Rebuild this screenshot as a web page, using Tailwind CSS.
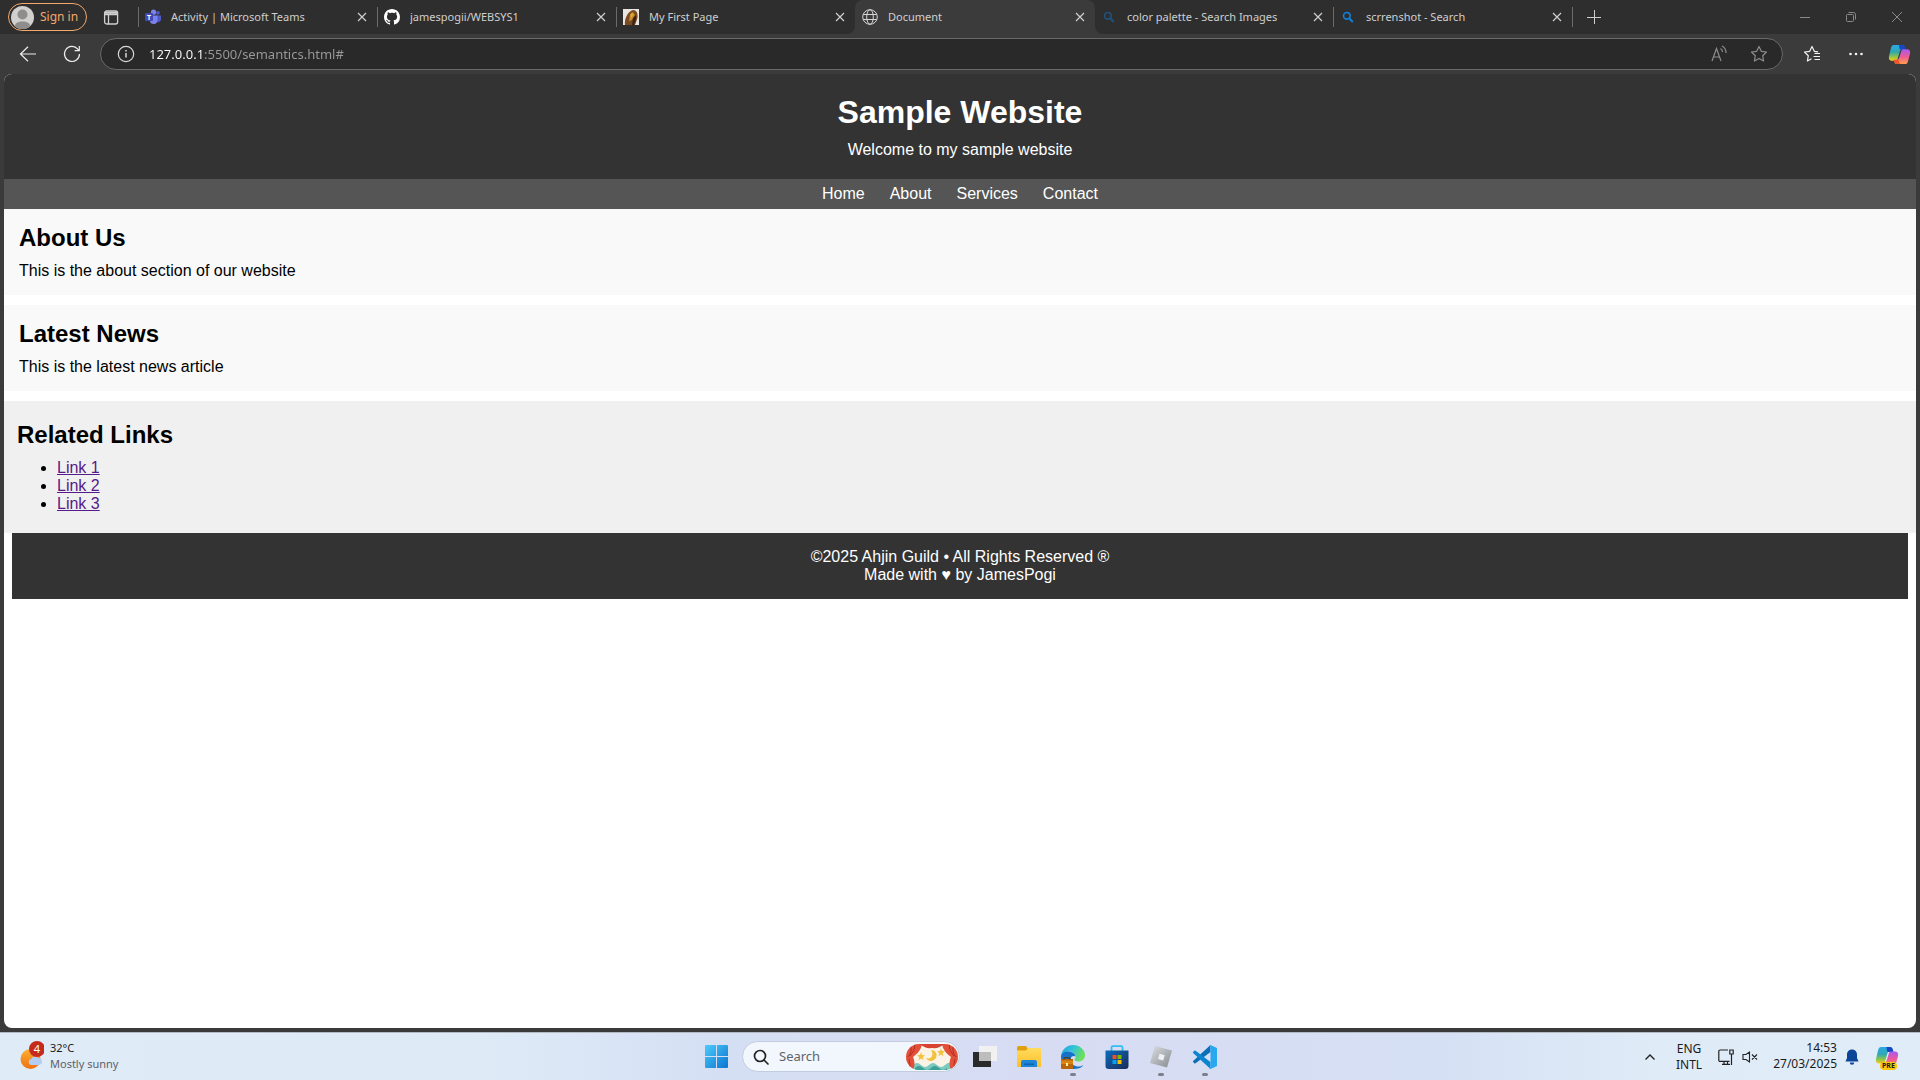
<!DOCTYPE html>
<html lang="en">
<head>
<meta charset="utf-8">
<title>Document</title>
<script src="https://cdn.jsdelivr.net/npm/@tailwindcss/browser@4"></script>
</head>
<body class="flex h-screen flex-col overflow-hidden bg-[#3b3b3b] font-['Noto_Sans',sans-serif]">

<svg class="absolute size-0" aria-hidden="true">
  <defs>
    <linearGradient id="cpA" x1="0" y1="0" x2="0" y2="1"><stop offset="0" stop-color="#2ba8e8"/><stop offset=".45" stop-color="#2fa9b0"/><stop offset=".75" stop-color="#8fc44a"/><stop offset="1" stop-color="#f5d414"/></linearGradient>
    <linearGradient id="cpB" x1="0" y1="0" x2="0" y2="1"><stop offset="0" stop-color="#a758f0"/><stop offset=".5" stop-color="#ee5a96"/><stop offset="1" stop-color="#ffa04a"/></linearGradient>
    <linearGradient id="win" x1="0" y1="0" x2="1" y2="1"><stop offset="0" stop-color="#4ccbfb"/><stop offset="1" stop-color="#0a74d0"/></linearGradient>
    <linearGradient id="fold" x1="0" y1="0" x2="0" y2="1"><stop offset="0" stop-color="#ffdc5c"/><stop offset="1" stop-color="#fcbf2e"/></linearGradient>
    <linearGradient id="edgeTop" x1="0" y1="0" x2="1" y2=".4"><stop offset="0" stop-color="#1b9de2"/><stop offset=".5" stop-color="#33c3d8"/><stop offset="1" stop-color="#6be05a"/></linearGradient>
    <linearGradient id="store" x1="0" y1="0" x2="1" y2="1"><stop offset="0" stop-color="#0a6cbf"/><stop offset="1" stop-color="#1b2b56"/></linearGradient>
    <linearGradient id="rbx" x1="0" y1="0" x2="1" y2="1"><stop offset="0" stop-color="#dcdfe2"/><stop offset="1" stop-color="#858b90"/></linearGradient>
    <linearGradient id="sun" x1="0" y1="0" x2="0" y2="1"><stop offset="0" stop-color="#fbb034"/><stop offset="1" stop-color="#f0700f"/></linearGradient>
    <symbol id="x" viewBox="0 0 16 16"><path d="M4 4l8 8M12 4l-8 8" fill="none" stroke="currentColor" stroke-width="1.2"/></symbol>
    <symbol id="mag" viewBox="0 0 16 16"><circle cx="6.8" cy="6.8" r="3.3" fill="none" stroke="currentColor" stroke-width="1.6"/><path d="M9.2 9.2l3.6 3.8" stroke="currentColor" stroke-width="2"/></symbol>
    <symbol id="copilot" viewBox="0 0 24 24">
      <path d="M6 2h8.500c1.500 0 2.300.8 2.700 2l.8 2.500h-3c-1.500 0-2.200.8-2.600 2l-2.200 7.500c-.5 1.500-1.200 2.500-2.800 2.500H4c-2.500 0-3.500-2-3-4.500L3 5.500C3.500 3.300 4.300 2 6 2z" fill="url(#cpA)"/>
      <path d="M11.500 2H15c1.500 0 2.300.8 2.700 2l.8 3h-4.700c-1 0-1.500-.5-1.900-1.500z" fill="#1747c4"/>
      <path d="M18 22H9.500c-1.500 0-2.300-.8-2.700-2L6 17.500h3c1.500 0 2.200-.8 2.600-2l2.200-7c.5-1.500 1.200-2 2.800-2H20c2.500 0 3.500 2 3 4.500l-2 7.500c-.5 2.200-1.300 3.500-3 3.500z" fill="url(#cpB)"/>
      <path d="M12.500 22h-3c-1.500 0-2.300-.8-2.700-2L6 17.500h3c1.500 0 2.200 0 2.500 1.500z" fill="#f0562c"/>
    </symbol>
  </defs>
</svg>

<!-- Tab strip -->
<div class="flex h-[34px] shrink-0 text-[11px] text-[#cfcfcf]">
  <div class="flex items-center rounded-br-lg bg-[#2e2e2e]">
    <button class="ml-2 flex h-7 w-[79px] items-center gap-[6px] rounded-full border border-[#f3a86c] pl-[2px] text-xs text-[#f3a86c]">
      <svg class="size-[23px]" viewBox="0 0 23 23"><clipPath id="av"><circle cx="11.500" cy="11.500" r="11.500"/></clipPath><g clip-path="url(#av)"><path d="M0 0h23v23H0z" fill="#d2d0ce"/><circle cx="11.500" cy="8.500" r="5" fill="#8f8d8b"/><path d="M4 23v-3c0-3 3-4.500 7.500-4.500S19 17 19 20v3z" fill="#8f8d8b"/></g></svg>
      <span>Sign in</span>
    </button>
    <button class="ml-4 mr-[19px]" aria-label="Tab actions"><svg class="size-4" viewBox="0 0 16 16" fill="none" stroke="#d0d0d0" stroke-width="1.300"><rect x="1.600" y="2" width="13" height="13" rx="2"/><path d="M1.600 5.500h13M5.500 5.500V15"/><path d="M2 3.800h12" stroke-width="2"/></svg></button>
    <div class="flex h-5 w-[239px] items-center gap-[10px] border-l border-[#6b6b6b] pl-[6px] pr-[7px]">
      <svg class="size-4" viewBox="0 0 16 16"><circle cx="8.500" cy="3.200" r="2.600" fill="#7b83eb"/><circle cx="13" cy="3.900" r="1.800" fill="#5059c9"/><path d="M11 6.500h5v4a3 3 0 0 1-5 2z" fill="#5059c9"/><path d="M5 6.500h7.500V11a4 4 0 0 1-7.500 2z" fill="#7b83eb"/><rect y="4" width="8" height="8" rx="1" fill="#4149b5"/><text x="4" y="10.500" font-size="7" font-weight="700" text-anchor="middle" fill="#fff">T</text></svg>
      <span class="flex-1 truncate">Activity | Microsoft Teams</span>
      <button aria-label="Close tab"><svg class="size-4"><use href="#x"/></svg></button>
    </div>
    <div class="flex h-5 w-[239px] items-center gap-[10px] border-l border-[#6b6b6b] pl-[6px] pr-[7px]">
      <svg class="size-4" viewBox="0 0 16 16"><path fill="#fff" d="M8 0C3.580 0 0 3.580 0 8c0 3.540 2.290 6.530 5.470 7.590.4.070.55-.17.55-.38 0-.19-.01-.82-.01-1.490-2.010.37-2.530-.49-2.690-.94-.09-.23-.48-.94-.82-1.130-.28-.15-.68-.52-.01-.53.630-.01 1.080.58 1.230.82.720 1.210 1.870.87 2.330.66.070-.52.280-.87.510-1.070-1.780-.2-3.640-.89-3.640-3.950 0-.87.310-1.590.820-2.150-.08-.2-.36-1.020.08-2.120 0 0 .67-.21 2.200.82.640-.18 1.320-.27 2-.27s1.360.09 2 .27c1.530-1.040 2.200-.82 2.200-.82.440 1.100.160 1.920.08 2.120.510.56.820 1.270.820 2.150 0 3.070-1.870 3.750-3.650 3.950.290.25.540.73.540 1.480 0 1.070-.01 1.930-.01 2.200 0 .21.150.46.550.38A8.010 8.010 0 0 0 16 8c0-4.420-3.580-8-8-8z"/></svg>
      <span class="flex-1 truncate">jamespogii/WEBSYS1</span>
      <button aria-label="Close tab"><svg class="size-4"><use href="#x"/></svg></button>
    </div>
    <div class="flex h-5 w-[239px] items-center gap-[10px] border-l border-[#6b6b6b] pl-[6px] pr-[7px]">
      <svg class="size-4" viewBox="0 0 16 16"><path d="M0 0h16v16H0z" fill="#e9e6e4"/><path d="M2 16C1 10 5 2 10 1c4 0 5 4 4.500 8L12 16z" fill="#7a4a20"/><path d="M7 5l3-2 2 3-3 5-3 1z" fill="#c98a2b"/><path d="M10 9l3-3v5l-2 5H9z" fill="#3d2416"/><path d="M8 6l1-2 1 2-2 3z" fill="#d4c32e"/></svg>
      <span class="flex-1 truncate">My First Page</span>
      <button aria-label="Close tab"><svg class="size-4"><use href="#x"/></svg></button>
    </div>
  </div>
  <div class="w-[240px] bg-[#2e2e2e]">
    <div class="flex h-full items-center gap-[10px] rounded-t-lg bg-[#3b3b3b] px-[7px]">
      <svg class="size-4" viewBox="0 0 16 16" fill="none" stroke="#d6d6d6"><circle cx="8" cy="8" r="7.300"/><ellipse cx="8" cy="8" rx="3.300" ry="7.300"/><path d="M1.300 5.500h13.400M1.300 10.500h13.400"/></svg>
      <span class="flex-1 truncate">Document</span>
      <button aria-label="Close tab"><svg class="size-4"><use href="#x"/></svg></button>
    </div>
  </div>
  <div class="flex flex-1 items-center rounded-bl-lg bg-[#2e2e2e]">
    <div class="flex h-5 w-[238px] items-center gap-[10px] pl-[6px] pr-[7px]">
      <svg class="size-4 text-[#20527c]"><use href="#mag"/></svg>
      <span class="flex-1 truncate">color palette - Search Images</span>
      <button aria-label="Close tab"><svg class="size-4"><use href="#x"/></svg></button>
    </div>
    <div class="flex h-5 w-[239px] items-center gap-[10px] border-l border-[#6b6b6b] pl-[6px] pr-[7px]">
      <svg class="size-4 text-[#1180dc]"><use href="#mag"/></svg>
      <span class="flex-1 truncate">scrrenshot - Search</span>
      <button aria-label="Close tab"><svg class="size-4"><use href="#x"/></svg></button>
    </div>
    <div class="flex h-5 flex-1 items-center border-l border-[#6b6b6b] pl-[13px]">
      <button aria-label="New tab"><svg class="size-4" viewBox="0 0 16 16"><path d="M8.500 1v14M1 8.500h14" stroke="#cfcfcf"/></svg></button>
    </div>
    <div class="flex text-[#8a8a8a]">
      <button class="flex w-[46px] justify-center" aria-label="Minimize"><svg class="size-3" viewBox="0 0 12 12"><path d="M1 6.500h10" stroke="currentColor"/></svg></button>
      <button class="flex w-[46px] justify-center" aria-label="Restore"><svg class="size-3" viewBox="0 0 12 12" fill="none" stroke="currentColor"><rect x="1.500" y="3.500" width="7" height="7" rx="1"/><path d="M3.500 1.500h5a2 2 0 0 1 2 2v5"/></svg></button>
      <button class="flex w-[46px] justify-center" aria-label="Close"><svg class="size-3" viewBox="0 0 12 12"><path d="M1 1l10 10M11 1L1 11" stroke="currentColor"/></svg></button>
    </div>
  </div>
</div>

<!-- Address row -->
<div class="flex h-10 shrink-0 items-center pl-[6px]">
  <button class="flex w-11 justify-center" aria-label="Back"><svg class="size-5" viewBox="0 0 20 20" fill="none" stroke="#ececec" stroke-width="1.200"><path d="M18 10H2.500M10 2.800L2.500 10l7.500 7.200"/></svg></button>
  <button class="flex w-11 justify-center" aria-label="Refresh"><svg class="size-5" viewBox="0 0 20 20" fill="none" stroke="#ececec" stroke-width="1.200"><path d="M17.500 10A7.500 7.500 0 1 1 15.800 5.200L17 6.500M17.300 2v4.700h-4.700"/></svg></button>
  <div class="ml-[6px] mr-[7px] flex h-8 flex-1 items-center rounded-full border border-[#696969] bg-[#292929] pl-4">
    <svg class="size-[18px]" viewBox="0 0 18 18" fill="none" stroke="#d8d8d8" stroke-width="1.200"><circle cx="9" cy="9" r="7.700"/><path d="M9 8v4.500M9 5v1.600" stroke-width="1.500"/></svg>
    <input class="ml-[14px] flex-1 bg-[linear-gradient(90deg,#fff_55px,#9a9a9a_55px)] bg-clip-text text-[13px]/5 text-transparent outline-none" aria-label="Address" value="127.0.0.1:5500/semantics.html#">
    <button class="flex w-10 justify-center" aria-label="Read aloud"><svg class="size-[18px]" viewBox="0 0 18 18" fill="none" stroke="#8d8d8d" stroke-width="1.200"><path d="M2 16L6.500 3.500 11 16M3.500 12h6"/><path d="M10.500 3.500c1.300.8 2 2 2 3.500M12 1c2.500 1.300 4 3.500 4 7"/></svg></button>
    <button class="mr-[3px] flex w-10 justify-center" aria-label="Add to favorites"><svg class="size-[18px]" viewBox="0 0 18 18" fill="none" stroke="#8d8d8d" stroke-width="1.200" stroke-linejoin="round"><path d="M9 1.500l2.300 4.800 5.200.7-3.800 3.700.9 5.300L9 13.500 4.400 16l.9-5.300L1.500 7l5.200-.7z"/></svg></button>
  </div>
  <button class="flex w-11 justify-center" aria-label="Favorites"><svg class="size-[18px]" viewBox="0 0 18 18" fill="none" stroke="#f2f2f2" stroke-width="1.200" stroke-linejoin="round"><path d="M15 6.800l-3.700-.5L9 1.500 6.700 6.300 1.500 7l3.800 3.700L4.400 16 8.500 13.800M11.500 8.500H17M10.500 11.500H17M11.500 14.500H17"/></svg></button>
  <button class="flex w-11 justify-center" aria-label="Settings and more"><svg class="size-4" viewBox="0 0 16 16" fill="#f2f2f2"><circle cx="2.500" cy="8" r="1.300"/><circle cx="8" cy="8" r="1.300"/><circle cx="13.500" cy="8" r="1.300"/></svg></button>
  <button class="flex w-[42px] justify-center" aria-label="Copilot"><svg class="size-[23px]"><use href="#copilot"/></svg></button>
</div>

<!-- Web page -->
<div class="mx-1 mb-1 flex-1 overflow-hidden rounded-lg bg-white font-['Liberation_Sans',Arial,sans-serif] text-base/[18px] text-black">
  <header class="bg-[#333] p-5 text-center text-white">
    <h1 class="mb-[10px] text-[32px]/[37px] font-bold">Sample Website</h1>
    <p>Welcome to my sample website</p>
  </header>
  <nav class="flex justify-center gap-[25px] bg-[#555] py-[6px] text-white">
    <a href="#">Home</a><a href="#">About</a><a href="#">Services</a><a href="#">Contact</a>
  </nav>
  <section class="mb-[10px] bg-[#f9f9f9] p-[15px]">
    <h2 class="mb-[10px] text-2xl/7 font-bold">About Us</h2>
    <p>This is the about section of our website</p>
  </section>
  <article class="mb-[10px] bg-[#f9f9f9] p-[15px]">
    <h2 class="mb-[10px] text-2xl/7 font-bold">Latest News</h2>
    <p>This is the latest news article</p>
  </article>
  <aside class="bg-[#f0f0f0] px-[13px] py-5">
    <h2 class="mb-[10px] text-2xl/7 font-bold">Related Links</h2>
    <ul class="list-disc pl-10">
      <li><a class="text-[#551a8b] underline" href="#">Link 1</a></li>
      <li><a class="text-[#551a8b] underline" href="#">Link 2</a></li>
      <li><a class="text-[#551a8b] underline" href="#">Link 3</a></li>
    </ul>
  </aside>
  <footer class="mx-2 bg-[#333] p-[15px] text-center text-white">
    <p>©2025 Ahjin Guild • All Rights Reserved ®</p>
    <p>Made with ♥ by JamesPogi</p>
  </footer>
</div>

<!-- Taskbar -->
<div class="grid h-12 shrink-0 grid-cols-[1fr_auto_1fr] items-center border-t border-[#b4bac4] bg-[linear-gradient(90deg,#dfebf7_0%,#dfeaf7_25%,#d5dff4_38%,#d7dcf3_55%,#d6e0f4_75%,#dfebf7_86%,#e0ecf7_100%)] text-xs text-[#1b1b1b]">
  <button class="flex items-center gap-[6px] justify-self-start pl-5 text-left text-[11px]/4">
    <svg class="h-8 w-6" viewBox="0 0 24 32"><circle cx="10.500" cy="18" r="10" fill="url(#sun)"/><path d="M12 24a3 3 0 0 1-.5-6 4 4 0 0 1 7-1 3.600 3.600 0 0 1 1 7z" fill="#b4cdf5"/><circle cx="17" cy="8" r="8" fill="#c42b1c"/><text x="17" y="12" font-size="11" text-anchor="middle" fill="#fff">4</text></svg>
    <span class="pb-px"><span class="block">32°C</span><span class="block text-[#5c6168]">Mostly sunny</span></span>
  </button>
  <div class="flex items-center pl-3">
    <button class="mr-[14px]" aria-label="Start"><svg class="size-[23px]" viewBox="0 0 23 23" fill="url(#win)"><path d="M0 1a1 1 0 0 1 1-1h10v11H0zM12 0h10a1 1 0 0 1 1 1v10H12zM0 12h11v11H1a1 1 0 0 1-1-1zM12 12h11v10a1 1 0 0 1-1 1H12z"/></svg></button>
    <div class="mr-[3px] flex h-[31px] w-[218px] items-center rounded-full border border-[#c3cde0] bg-[#f2f6fd] pl-[10px]">
      <svg class="size-4" viewBox="0 0 16 16" fill="none" stroke="#222" stroke-width="1.700"><circle cx="7" cy="7" r="5.500"/><path d="M11 11l4 4" stroke-linecap="round"/></svg>
      <input class="ml-[10px] w-[127px] text-[13px] outline-none placeholder:text-[#606468]" aria-label="Search" placeholder="Search">
      <svg class="h-[26px] w-[52px]" viewBox="0 0 52 26"><clipPath id="pill"><rect width="52" height="26" rx="13"/></clipPath><g clip-path="url(#pill)"><path d="M0 0h52v26H0z" fill="#fbf3e6"/><path d="M7 21q4-4 8 0t8 0 8 0 8 0 8-1v7H7z" fill="#7cc9bf"/><path d="M9 24q4-4 8 0t8 0 8 0 8 0v3H9z" fill="#3c9f98"/><path d="M0 0h16C15 6 11 10 7 13c2 4 2 9 0 13H0zM52 0H36c1 6 5 10 9 13-2 4-2 9 0 13h7z" fill="#e2503a"/><path d="M14 0h24q-5 5-12 4-7 1-12-4z" fill="#d84331"/><path d="M4 0q3 8-2 13M9 0Q9 7 4 12M48 0q-3 8 2 13M43 0q0 7 5 12M3 15q2 5 0 11M49 15q-2 5 0 11" fill="none" stroke="#b52d22"/><path d="M25 6c7 0 8 10 0 11-2 0-4-1-5-3 6 2 8-4 5-8zM15 8l1 3 3 .3-2.300 2 .8 3-2.500-1.700-2.500 1.700.8-3-2.300-2 3-.3zM35 4l1 3 3 .3-2.300 2 .8 3L35 10.600l-2.500 1.700.8-3-2.300-2 3-.3z" fill="#f3c23c"/></g></svg>
    </div>
    <button class="flex w-11 justify-center" aria-label="Task view"><svg class="size-6" viewBox="0 0 24 24"><path d="M0 7h18v15H0z" fill="#2a2a2a"/><path d="M6 1h18v15H6z" fill="#f1f1f1"/><path d="M6 7h12v9H6z" fill="#bdbdbd"/></svg></button>
    <button class="flex w-11 justify-center" aria-label="File Explorer"><svg class="size-6" viewBox="0 0 24 24"><path d="M0 2.500A1.500 1.500 0 0 1 1.500 1H9l2 3v3H0z" fill="#e0a010"/><path d="M0 5.500h9L11 3h12a1 1 0 0 1 1 1v18H0z" fill="url(#fold)"/><path d="M4 22v-5a2 2 0 0 1 2-2h12a2 2 0 0 1 2 2v5z" fill="#1d84d8"/><path d="M7 18.500h10v1.500H7z" fill="#0f62ac"/></svg></button>
    <button class="relative flex w-11 justify-center" aria-label="Microsoft Edge"><svg class="size-6" viewBox="0 0 24 24"><path d="M0 11C1 4 6 0 12 0c7 0 12 5 12 10 0 4-3 6.500-6.500 6.500-3 0-4.500-1.200-4-2 1-1 1.300-2 1-3.500C14 8 11 6.500 8 6.500c-4 0-7 2-8 4.500z" fill="url(#edgeTop)"/><path d="M0 12c0-4 4-6 8-5.500 4 .3 6.500 3 6.500 5-1-1-5-1-5 3 0 5 5 7.500 9 7 2-.3 3.500-1.500 4-1.500-2 3-6 4-10 4C5 24 0 19 0 12z" fill="#1473c8"/><path d="M0 14h12v10H1a1 1 0 0 1-1-1z" fill="#b8650e"/><path d="M0 15.500h12V19H0z" fill="#d98516"/><path d="M3 14.500v-1.700h6v1.700" fill="none" stroke="#5d3208"/><path d="M5 18h2v3H5z" fill="#fff09a"/></svg><span class="absolute -bottom-[7px] h-[3px] w-[6px] rounded-full bg-[#7c808c]"></span></button>
    <button class="flex w-11 justify-center" aria-label="Microsoft Store"><svg class="size-6" viewBox="0 0 24 24"><path d="M6.500 7V2.500A1.300 1.300 0 0 1 7.800 1.200h8.400a1.300 1.300 0 0 1 1.300 1.300V7" fill="none" stroke="#35bdf3" stroke-width="1.800"/><path d="M.5 5.500h23V21a3 3 0 0 1-3 3h-17a3 3 0 0 1-3-3z" fill="url(#store)"/><path d="M7.500 10h4v4h-4z" fill="#f25022"/><path d="M12.500 10h4v4h-4z" fill="#7fba00"/><path d="M7.500 15h4v4h-4z" fill="#00a4ef"/><path d="M12.500 15h4v4h-4z" fill="#ffb900"/></svg></button>
    <button class="relative flex w-11 justify-center" aria-label="Roblox Studio"><svg class="size-6" viewBox="0 0 24 24"><path d="M6 1l17 4.500-5 17L1 18z" fill="url(#rbx)"/><path d="M10.500 8.800l5.200 1.500-1.500 5.200L9 14z" fill="#eef0f3"/></svg><span class="absolute -bottom-[7px] h-[3px] w-[6px] rounded-full bg-[#7c808c]"></span></button>
    <button class="relative flex w-11 justify-center" aria-label="Visual Studio Code"><svg class="size-6" viewBox="0 0 24 24"><path d="M17.500 0v7L2.600 18.200a1 1 0 0 1-1.300 0L.4 17.300a1 1 0 0 1 0-1.500z" fill="#0a6fb8"/><path d="M17.500 24v-7L2.600 5.800a1 1 0 0 0-1.300 0L.4 6.700a1 1 0 0 0 0 1.500z" fill="#0c85cf"/><path d="M17.500 0L23 2.400a1.500 1.500 0 0 1 1 1.400v16.400a1.500 1.500 0 0 1-1 1.400L17.500 24c-.7 0-1.200-.3-1.500-.8.800.5 1.500 0 1.500-.9V1.700c0-.9-.7-1.400-1.500-.9.300-.5.800-.8 1.500-.8z" fill="#28a8f0"/></svg><span class="absolute -bottom-[7px] h-[3px] w-[6px] rounded-full bg-[#7c808c]"></span></button>
  </div>
  <div class="flex items-center justify-self-end pr-[21px] text-xs/4">
    <button class="mr-5" aria-label="Show hidden icons"><svg class="size-3" viewBox="0 0 12 12"><path d="M1.500 8.500L6 4l4.500 4.500" fill="none" stroke="#222" stroke-width="1.400"/></svg></button>
    <button class="mr-4 text-center">ENG<br>INTL</button>
    <button class="mr-[15px] flex items-center gap-2" aria-label="Network and volume">
      <svg class="size-4" viewBox="0 0 16 16" fill="none" stroke="#222" stroke-width="1.200"><path d="M10 1H2a1.200 1.200 0 0 0-1.200 1.200v9A1.200 1.200 0 0 0 2 12.400h9.500M4 15.300h8M6 12.500v2.800M9.500 12.500v2.800"/><path d="M11.800 1h3.400v4h-3.400zM13.500 5v11"/></svg>
      <svg class="size-4" viewBox="0 0 16 16" fill="none" stroke="#222" stroke-width="1.100"><path d="M7.500 3v10L4 10.500H1v-5h3zM10 5.500l5 5M15 5.500l-5 5"/></svg>
    </button>
    <button class="mr-2 pb-px text-right">14:53<br>27/03/2025</button>
    <button class="mr-4" aria-label="Notifications"><svg class="h-4 w-[14px]" viewBox="0 0 14 16"><path d="M7 .5c3 0 5 2.200 5 5V9l1.500 3.500H.5L2 9V5.500c0-2.800 2-5 5-5zM4.800 13.500h4.400a2.200 2.200 0 0 1-4.400 0z" fill="#0a4597"/></svg></button>
    <button class="relative" aria-label="Copilot preview"><svg class="size-6"><use href="#copilot"/></svg><span class="absolute -bottom-px left-[5px] rounded-sm bg-[#ffc60a] px-[2px] text-[7px]/[8px] font-bold">PRE</span></button>
  </div>
</div>
</body>
</html>
